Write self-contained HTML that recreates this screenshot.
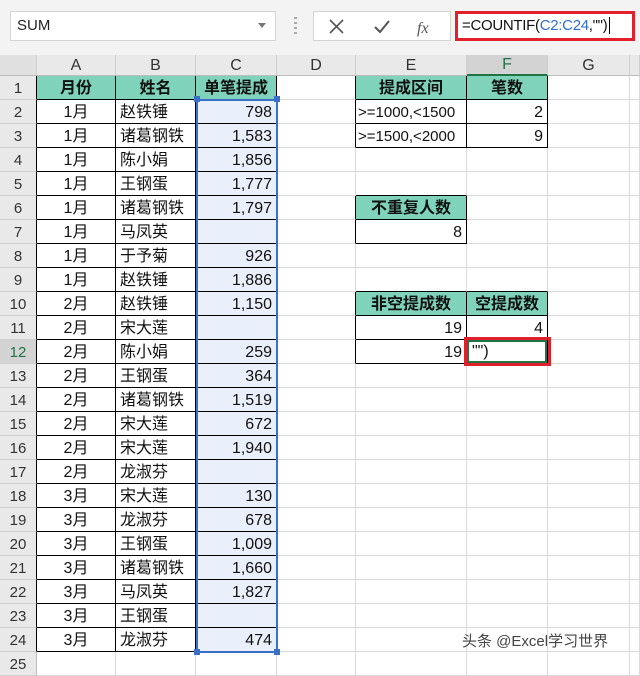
<!DOCTYPE html>
<html><head><meta charset="utf-8"><style>
body{margin:0;width:640px;height:664px;overflow:hidden;background:#fff;font-family:"Liberation Sans","Noto Sans CJK SC",sans-serif;position:relative}
.top{position:absolute;left:0;top:0;width:640px;height:55px;background:#f3f3f3}
.nb{position:absolute;left:10px;top:11px;width:266px;height:30px;background:#fff;border:1px solid #d4d4d4;box-sizing:border-box;font-size:15px;line-height:28px;padding-left:6px;color:#222}
.arr{position:absolute;left:258px;top:23px;width:0;height:0;border-left:4px solid transparent;border-right:4px solid transparent;border-top:5px solid #777}
.dots{position:absolute;left:294px;top:17px;width:3px;height:20px;background:repeating-linear-gradient(#aaa 0 2px,transparent 2px 5px)}
.fxb{position:absolute;left:313px;top:11px;width:138px;height:30px;background:#fff;border:1px solid #d4d4d4;box-sizing:border-box}
.fb{position:absolute;left:455px;top:11px;width:180px;height:30px;background:#fff;border:3px solid #e0202a;box-sizing:border-box;font-size:15px;line-height:24px;padding-left:4px;color:#111;letter-spacing:-0.3px}
table{position:absolute;left:0;top:55px;border-collapse:separate;border-spacing:0;table-layout:fixed}
td{border-right:1px solid #dadada;border-bottom:1px solid #dadada;height:24px;line-height:20px;padding:2px 4px 0;font-size:16px;white-space:nowrap;overflow:hidden;box-sizing:border-box;color:#111}
tr.h td{height:21px;line-height:18px;padding:1px 0 0;background:#e9e9e9;text-align:center;font-size:16px;color:#333;border-right:1px solid #cfcfcf;border-bottom:1px solid #bdbdbd}
td.r{background:#e9e9e9;text-align:center;font-size:15px;color:#333;padding:2px 0 0;border-right:1px solid #bdbdbd;border-bottom:1px solid #cfcfcf}
td.kr{border-right-color:#000}
td.kb{border-bottom-color:#000}
td.k{border-right-color:#000;border-bottom-color:#000}
.g{background:#7fd3ba;font-weight:bold;text-align:center}
.c{text-align:center}.n{text-align:right}
.s{background:#e9f0fb}
</style></head><body>
<div class="top"></div>
<div class="nb">SUM</div><div class="arr"></div>
<div class="dots"></div>
<div class="fxb">
<svg width="138" height="30" style="position:absolute;left:0;top:0"><path d="M16 8 L29 21 M29 8 L16 21" stroke="#555" stroke-width="1.6"/><path d="M61 15 L66 20 L75 9" stroke="#555" stroke-width="2" fill="none"/><text x="103" y="21" font-family="Liberation Serif" font-style="italic" font-size="16" fill="#555">fx</text></svg>
</div>
<div class="fb">=COUNTIF(<span style="color:#2f6fcf">C2:C24</span>,"")<span style="border-left:1px solid #000;margin-left:2px"></span></div>
<table>
<colgroup><col style="width:37px"><col style="width:79px"><col style="width:80px"><col style="width:81px"><col style="width:79px"><col style="width:111px"><col style="width:81px"><col style="width:82px"><col style="width:10px"></colgroup>
<tr class="h"><td style="background:#e0e0e0"></td><td class="kb">A</td><td class="kb">B</td><td class="kb">C</td><td>D</td><td class="kb">E</td><td class="kb" style="background:#d3d3d3;border-bottom:2px solid #217346;color:#217346">F</td><td>G</td><td></td></tr>
<tr><td class="r kr">1</td><td class="k g">月份</td><td class="k g">姓名</td><td class="k g">单笔提成</td><td class="kr"></td><td class="k g">提成区间</td><td class="k g">笔数</td><td></td><td></td></tr>
<tr><td class="r kr">2</td><td class="k c">1月</td><td class="k">赵铁锤</td><td class="k n s">798</td><td class="kr"></td><td class="k" style="font-size:15px;padding:2px 2px 0">&gt;=1000,&lt;1500</td><td class="k n">2</td><td></td><td></td></tr>
<tr><td class="r kr">3</td><td class="k c">1月</td><td class="k">诸葛钢铁</td><td class="k n s">1,583</td><td class="kr"></td><td class="k" style="font-size:15px;padding:2px 2px 0">&gt;=1500,&lt;2000</td><td class="k n">9</td><td></td><td></td></tr>
<tr><td class="r kr">4</td><td class="k c">1月</td><td class="k">陈小娟</td><td class="k n s">1,856</td><td></td><td></td><td></td><td></td><td></td></tr>
<tr><td class="r kr">5</td><td class="k c">1月</td><td class="k">王钢蛋</td><td class="k n s">1,777</td><td></td><td class="kb"></td><td></td><td></td><td></td></tr>
<tr><td class="r kr">6</td><td class="k c">1月</td><td class="k">诸葛钢铁</td><td class="k n s">1,797</td><td class="kr"></td><td class="k g">不重复人数</td><td></td><td></td><td></td></tr>
<tr><td class="r kr">7</td><td class="k c">1月</td><td class="k">马凤英</td><td class="k n s"></td><td class="kr"></td><td class="k n">8</td><td></td><td></td><td></td></tr>
<tr><td class="r kr">8</td><td class="k c">1月</td><td class="k">于予菊</td><td class="k n s">926</td><td></td><td></td><td></td><td></td><td></td></tr>
<tr><td class="r kr">9</td><td class="k c">1月</td><td class="k">赵铁锤</td><td class="k n s">1,886</td><td></td><td class="kb"></td><td class="kb"></td><td></td><td></td></tr>
<tr><td class="r kr">10</td><td class="k c">2月</td><td class="k">赵铁锤</td><td class="k n s">1,150</td><td class="kr"></td><td class="k g">非空提成数</td><td class="k g">空提成数</td><td></td><td></td></tr>
<tr><td class="r kr">11</td><td class="k c">2月</td><td class="k">宋大莲</td><td class="k n s"></td><td class="kr"></td><td class="k n">19</td><td class="k n">4</td><td></td><td></td></tr>
<tr><td class="r kr" style="background:#d3d3d3;color:#217346">12</td><td class="k c">2月</td><td class="k">陈小娟</td><td class="k n s">259</td><td class="kr"></td><td class="k n">19</td><td class="k" style="padding:0;position:relative;overflow:visible"><div style="position:absolute;left:-3px;top:-3px;width:87px;height:29px;border:3px solid #e0202a;box-sizing:border-box"></div><div style="position:absolute;left:0;top:0;width:80px;height:23px;border:2px solid #217346;box-sizing:border-box;padding-left:3px;line-height:20px">"")</div></td><td></td><td></td></tr>
<tr><td class="r kr">13</td><td class="k c">2月</td><td class="k">王钢蛋</td><td class="k n s">364</td><td></td><td></td><td></td><td></td><td></td></tr>
<tr><td class="r kr">14</td><td class="k c">2月</td><td class="k">诸葛钢铁</td><td class="k n s">1,519</td><td></td><td></td><td></td><td></td><td></td></tr>
<tr><td class="r kr">15</td><td class="k c">2月</td><td class="k">宋大莲</td><td class="k n s">672</td><td></td><td></td><td></td><td></td><td></td></tr>
<tr><td class="r kr">16</td><td class="k c">2月</td><td class="k">宋大莲</td><td class="k n s">1,940</td><td></td><td></td><td></td><td></td><td></td></tr>
<tr><td class="r kr">17</td><td class="k c">2月</td><td class="k">龙淑芬</td><td class="k n s"></td><td></td><td></td><td></td><td></td><td></td></tr>
<tr><td class="r kr">18</td><td class="k c">3月</td><td class="k">宋大莲</td><td class="k n s">130</td><td></td><td></td><td></td><td></td><td></td></tr>
<tr><td class="r kr">19</td><td class="k c">3月</td><td class="k">龙淑芬</td><td class="k n s">678</td><td></td><td></td><td></td><td></td><td></td></tr>
<tr><td class="r kr">20</td><td class="k c">3月</td><td class="k">王钢蛋</td><td class="k n s">1,009</td><td></td><td></td><td></td><td></td><td></td></tr>
<tr><td class="r kr">21</td><td class="k c">3月</td><td class="k">诸葛钢铁</td><td class="k n s">1,660</td><td></td><td></td><td></td><td></td><td></td></tr>
<tr><td class="r kr">22</td><td class="k c">3月</td><td class="k">马凤英</td><td class="k n s">1,827</td><td></td><td></td><td></td><td></td><td></td></tr>
<tr><td class="r kr">23</td><td class="k c">3月</td><td class="k">王钢蛋</td><td class="k n s"></td><td></td><td></td><td></td><td></td><td></td></tr>
<tr><td class="r kr">24</td><td class="k c">3月</td><td class="k">龙淑芬</td><td class="k n s">474</td><td></td><td></td><td></td><td></td><td></td></tr>
<tr><td class="r">25</td><td></td><td></td><td></td><td></td><td></td><td></td><td></td><td></td></tr>
</table>
<div style="position:absolute;left:196px;top:99px;width:82px;height:554px;border:2px solid #3a70c8;box-sizing:border-box"></div>
<div style="position:absolute;left:194px;top:96px;width:6px;height:6px;background:#3a70c8"></div>
<div style="position:absolute;left:274px;top:96px;width:6px;height:6px;background:#3a70c8"></div>
<div style="position:absolute;left:194px;top:649px;width:6px;height:6px;background:#3a70c8"></div>
<div style="position:absolute;left:274px;top:649px;width:6px;height:6px;background:#3a70c8"></div>
<div style="position:absolute;left:462px;top:630px;font-size:15px;color:#444;text-shadow:0 0 2px #fff">头条 @Excel学习世界</div>
</body></html>
